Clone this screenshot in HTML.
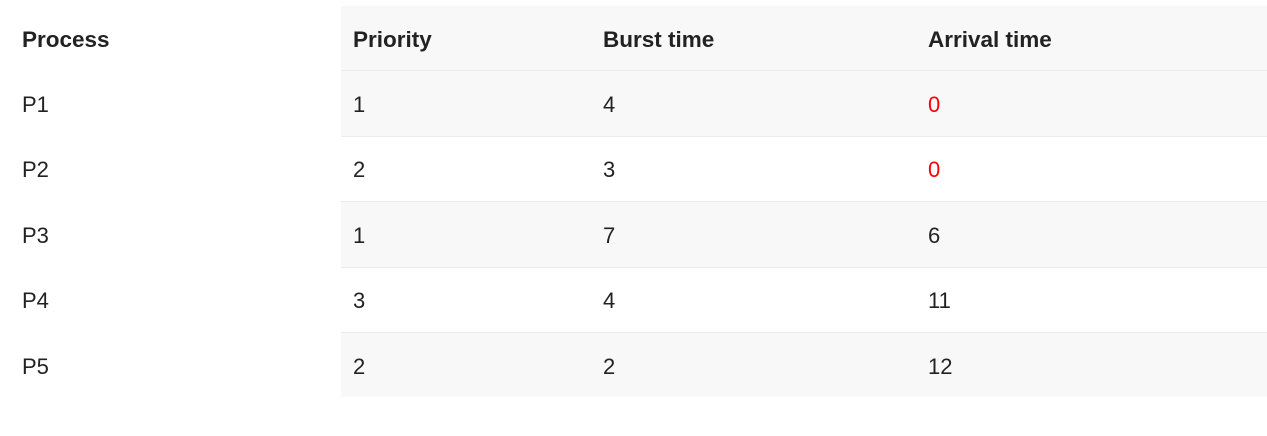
<!DOCTYPE html>
<html><head><style>
body{margin:0;background:#fff;width:1267px;height:436px;overflow:hidden;font-family:"Liberation Sans",sans-serif;color:#222;}
.bg{position:absolute;left:341px;width:926px;background:#f8f8f8;}
.line{position:absolute;left:341px;width:926px;height:1px;background:#ebebeb;}
.t{position:absolute;font-size:22px;line-height:24px;}
.b{font-weight:bold;font-size:22.5px;}
.r{color:#f00;}
</style></head><body>
<div class="bg" style="top:6px;height:64px"></div>
<div class="line" style="top:70px"></div>
<div class="bg" style="top:71px;height:65px"></div>
<div class="line" style="top:136px"></div>
<div class="line" style="top:201px"></div>
<div class="bg" style="top:202px;height:65px"></div>
<div class="line" style="top:267px"></div>
<div class="line" style="top:332px"></div>
<div class="bg" style="top:333px;height:64px"></div>

<div class="t b" style="left:22px;top:28px">Process</div>
<div class="t b" style="left:353px;top:28px">Priority</div>
<div class="t b" style="left:603px;top:28px">Burst time</div>
<div class="t b" style="left:928px;top:28px">Arrival time</div>

<div class="t" style="left:22px;top:93px">P1</div><div class="t" style="left:353px;top:93px">1</div><div class="t" style="left:603px;top:93px">4</div><div class="t r" style="left:928px;top:93px">0</div>
<div class="t" style="left:22px;top:158px">P2</div><div class="t" style="left:353px;top:158px">2</div><div class="t" style="left:603px;top:158px">3</div><div class="t r" style="left:928px;top:158px">0</div>
<div class="t" style="left:22px;top:224px">P3</div><div class="t" style="left:353px;top:224px">1</div><div class="t" style="left:603px;top:224px">7</div><div class="t" style="left:928px;top:224px">6</div>
<div class="t" style="left:22px;top:289px">P4</div><div class="t" style="left:353px;top:289px">3</div><div class="t" style="left:603px;top:289px">4</div><div class="t" style="left:928px;top:289px">11</div>
<div class="t" style="left:22px;top:355px">P5</div><div class="t" style="left:353px;top:355px">2</div><div class="t" style="left:603px;top:355px">2</div><div class="t" style="left:928px;top:355px">12</div>
</body></html>
